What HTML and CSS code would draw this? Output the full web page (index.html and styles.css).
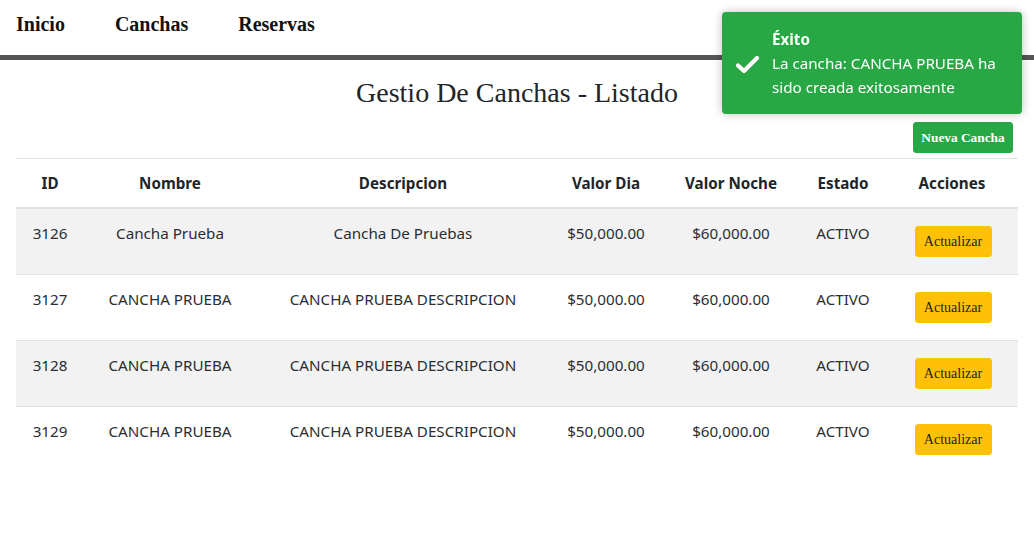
FILE: index.html
```html
<!DOCTYPE html>
<html lang="es">
<head>
<meta charset="utf-8">
<title>Gestio De Canchas</title>
<link rel="stylesheet" href="styles.css">
</head>
<body>
<nav class="topnav">
  <a href="#">Inicio</a>
  <a href="#">Canchas</a>
  <a href="#">Reservas</a>
</nav>
<main class="content">
  <h1 class="title">Gestio De Canchas - Listado</h1>
  <div class="actions-bar">
    <button class="btn btn-success">Nueva Cancha</button>
  </div>
  <table class="table">
    <colgroup>
      <col class="c-id"><col class="c-nombre"><col class="c-desc"><col class="c-vd"><col class="c-vn"><col class="c-estado"><col class="c-acc">
    </colgroup>
    <thead>
      <tr><th>ID</th><th>Nombre</th><th>Descripcion</th><th>Valor Dia</th><th>Valor Noche</th><th>Estado</th><th>Acciones</th></tr>
    </thead>
    <tbody>
      <tr><td>3126</td><td>Cancha Prueba</td><td>Cancha De Pruebas</td><td>$50,000.00</td><td>$60,000.00</td><td>ACTIVO</td><td><button class="btn btn-warning">Actualizar</button></td></tr>
      <tr><td>3127</td><td>CANCHA PRUEBA</td><td>CANCHA PRUEBA DESCRIPCION</td><td>$50,000.00</td><td>$60,000.00</td><td>ACTIVO</td><td><button class="btn btn-warning">Actualizar</button></td></tr>
      <tr><td>3128</td><td>CANCHA PRUEBA</td><td>CANCHA PRUEBA DESCRIPCION</td><td>$50,000.00</td><td>$60,000.00</td><td>ACTIVO</td><td><button class="btn btn-warning">Actualizar</button></td></tr>
      <tr><td>3129</td><td>CANCHA PRUEBA</td><td>CANCHA PRUEBA DESCRIPCION</td><td>$50,000.00</td><td>$60,000.00</td><td>ACTIVO</td><td><button class="btn btn-warning">Actualizar</button></td></tr>
    </tbody>
  </table>
</main>
<div class="toast">
  <svg class="toast-icon" width="26" height="20" viewBox="0 0 26 20" aria-hidden="true">
    <polyline points="3,10.5 9,16 22,3" fill="none" stroke="#fff" stroke-width="4.2" stroke-linecap="round" stroke-linejoin="round"/>
  </svg>
  <div class="toast-title">Éxito</div>
  <div class="toast-msg">La cancha: CANCHA PRUEBA ha sido creada exitosamente</div>
</div>
</body>
</html>
```

FILE: styles.css
```css
html, body {
  margin: 0;
  padding: 0;
  background: #fff;
}
body {
  font-family: "Noto Sans", "Open Sans", sans-serif;
  color: #212529;
}
.topnav {
  display: flex;
  gap: 50px;
  padding: 12px 16px 19px;
  border-bottom: 5px solid #555;
}
.topnav a {
  font-family: "Liberation Serif", serif;
  font-weight: bold;
  font-size: 20px;
  line-height: 24px;
  color: #111;
  text-decoration: none;
}
.content {
  padding: 0 16px;
}
.title {
  font-family: "Liberation Serif", serif;
  font-weight: normal;
  font-size: 28px;
  line-height: 34px;
  text-align: center;
  margin: 16px 0 12px;
  color: #212529;
}
.actions-bar {
  display: flex;
  justify-content: flex-end;
  padding-right: 5px;
  margin-bottom: 5px;
}
.btn {
  font-family: "Liberation Serif", serif;
  border: 1px solid transparent;
  border-radius: 3px;
  height: 31px;
  cursor: pointer;
}
.btn-success {
  background: #28a745;
  border-color: #28a745;
  color: #fff;
  font-weight: bold;
  font-size: 13.33px;
  width: 100px;
  padding: 0;
}
.btn-warning {
  background: #ffc107;
  border-color: #ffc107;
  color: #212529;
  font-size: 14px;
  width: 77px;
  padding: 0;
  margin: 5px 0 5px 2px;
}
.table {
  width: 100%;
  table-layout: fixed;
  border-collapse: collapse;
  font-size: 15.2px;
}
.c-id { width: 68px; }
.c-nombre { width: 172px; }
.c-desc { width: 294px; }
.c-vd { width: 112px; }
.c-vn { width: 138px; }
.c-estado { width: 86px; }
.c-acc { width: 132px; }
.table th, .table td {
  padding: 12px 0;
  text-align: center;
  vertical-align: top;
  line-height: 24px;
  border-top: 1px solid #dee2e6;
}
.table th {
  font-weight: bold;
  border-bottom: 2px solid #dee2e6;
}
.table thead + tbody tr:first-child td {
  border-top: 0;
}
.table tbody tr:nth-child(odd) {
  background: #f2f2f2;
}
.table td {
  font-weight: 400;
  color: #2a2e33;
}
.toast {
  position: fixed;
  top: 12px;
  right: 12px;
  width: 300px;
  box-sizing: border-box;
  padding: 15px 15px 15px 50px;
  background: #28a745;
  color: #fff;
  border-radius: 4px;
  box-shadow: 0 0 10px rgba(0,0,0,0.25);
  font-size: 15.2px;
  line-height: 24px;
}
.toast-icon {
  position: absolute;
  left: 13px;
  top: 43px;
}
.toast-title {
  font-weight: bold;
}
```
